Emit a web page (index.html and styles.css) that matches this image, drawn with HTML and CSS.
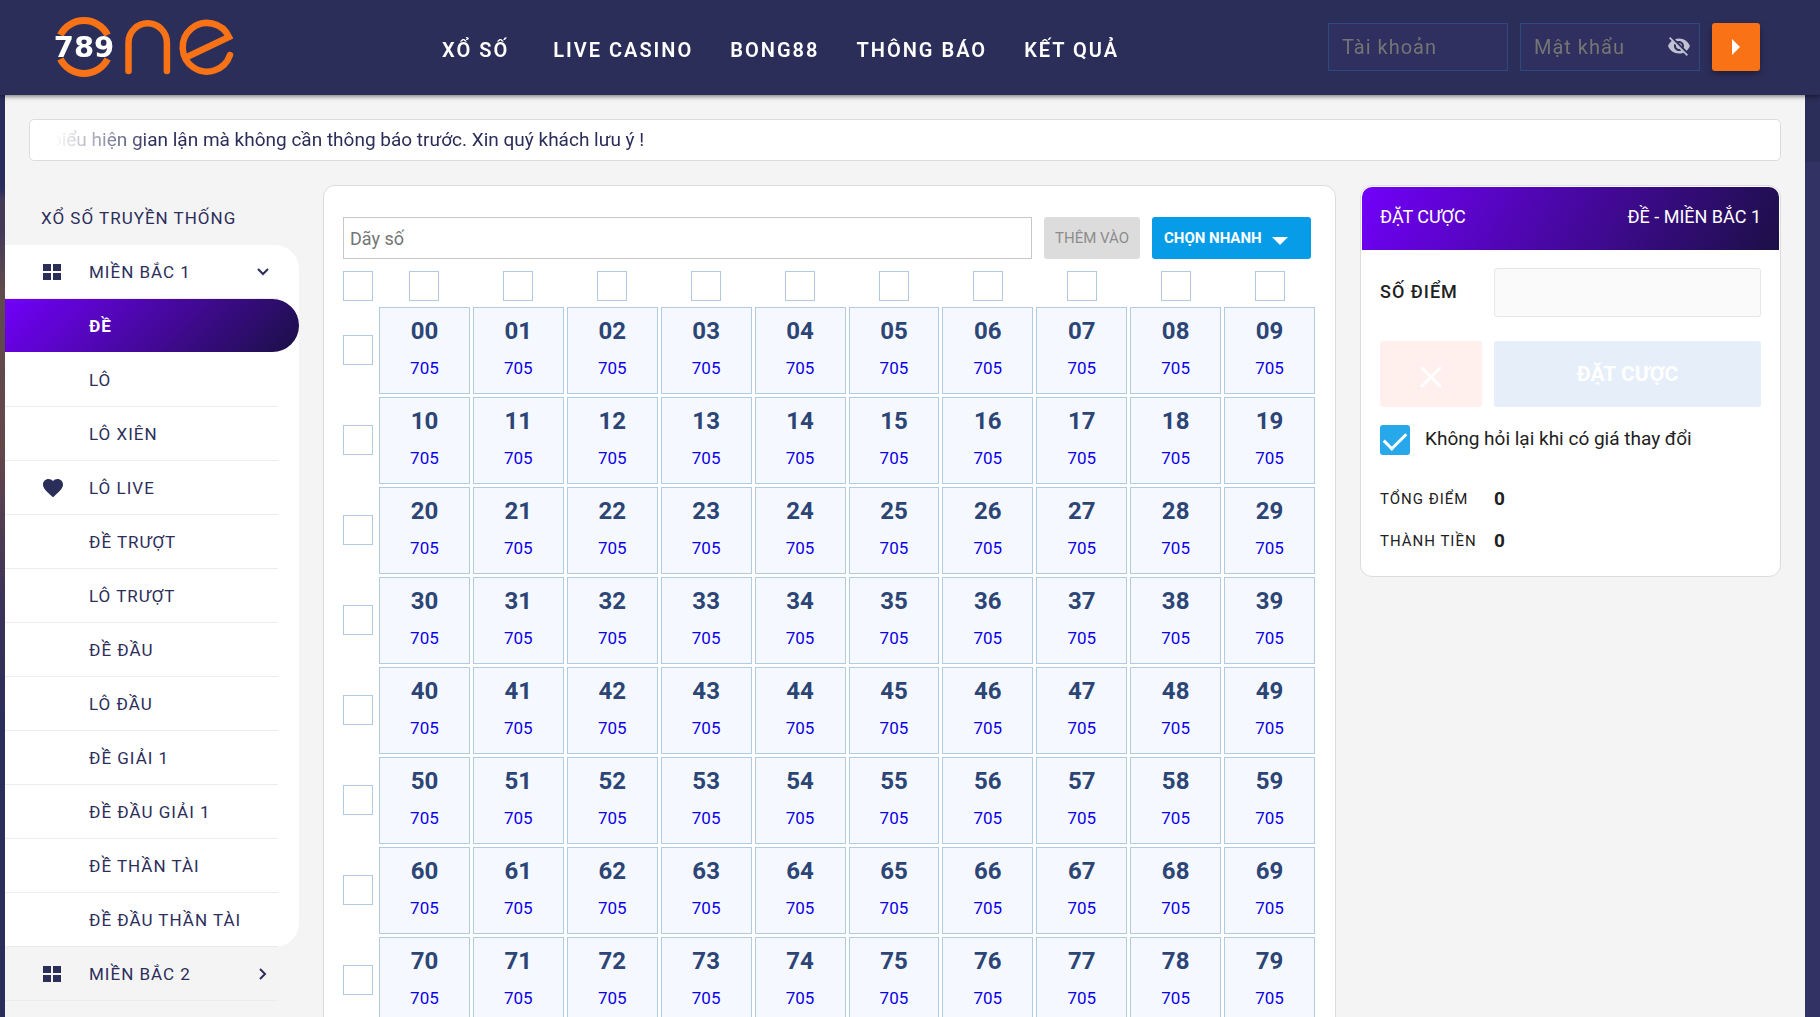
FILE: index.html
```html
<!DOCTYPE html>
<html lang="vi">
<head>
  <meta charset="utf-8">
  <meta name="viewport" content="width=device-width, initial-scale=1">
  <title>789One - Xổ số</title>
  <link rel="stylesheet" href="styles.css">
</head>
<body>
  <svg class="sprite" aria-hidden="true">
    <symbol id="i-grid" viewBox="0 0 18 16"><path d="M0 0h8v7H0zM10 0h8v7h-8zM0 9h8v7H0zM10 9h8v7h-8z"/></symbol>
    <symbol id="i-heart" viewBox="2 3 20 18"><path d="M12 21.35l-1.45-1.32C5.4 15.36 2 12.28 2 8.5 2 5.42 4.42 3 7.5 3c1.74 0 3.41.81 4.5 2.09C13.09 3.81 14.76 3 16.5 3 19.58 3 22 5.42 22 8.5c0 3.78-3.4 6.86-8.55 11.54L12 21.35z"/></symbol>
    <symbol id="i-chevron" viewBox="0 0 12 12"><path d="M3 1l5 5-5 5" fill="none" stroke="currentColor" stroke-width="2"/></symbol>
  </svg>

  <header class="header">
    <a class="logo" href="#" aria-label="789 One">
      <svg width="186" height="64" viewBox="49 15 186 64">
        <g fill="none" stroke="#f97316" stroke-width="7">
          <path d="M60.400 35A26.500 26.500 0 0 1 107.600 35M60.400 59A26.500 26.500 0 0 0 107.600 59"/>
          <path stroke-width="6.500" stroke-linecap="round" d="M128.500 71V42.500a19.200 19.200 0 0 1 38.400 0V71M230 55A24.300 24.300 0 1 1 229 37L189 56"/>
        </g>
        <text class="logo-digits" x="84" y="57" text-anchor="middle">789</text>
      </svg>
    </a>
    <nav class="nav">
      <a class="nav-first" href="#">XỔ SỐ</a>
      <a href="#">LIVE CASINO</a>
      <a href="#">BONG88</a>
      <a href="#">THÔNG BÁO</a>
      <a href="#">KẾT QUẢ</a>
    </nav>
    <form class="login">
      <input class="login-input" type="text" placeholder="Tài khoản" aria-label="Tài khoản">
      <div class="password">
        <input class="login-input" type="password" placeholder="Mật khẩu" aria-label="Mật khẩu">
        <button class="eye" type="button" aria-label="Hiện mật khẩu">
          <svg width="24" height="24" viewBox="0 0 24 24" fill="currentColor"><path d="M12 7c2.760 0 5 2.240 5 5 0 .65-.13 1.260-.36 1.830l2.920 2.920c1.510-1.260 2.700-2.890 3.430-4.750-1.730-4.390-6-7.500-11-7.500-1.400 0-2.740.25-3.980.7l2.160 2.160C10.740 7.130 11.350 7 12 7zM2 4.270l2.280 2.280.46.46C3.080 8.300 1.780 10.020 1 12c1.730 4.390 6 7.500 11 7.500 1.550 0 3.030-.3 4.380-.84l.42.42L19.730 22 21 20.730 3.270 3 2 4.270zM7.530 9.800l1.550 1.550c-.05.21-.08.43-.08.65 0 1.660 1.340 3 3 3 .22 0 .44-.03.65-.08l1.550 1.550c-.67.33-1.410.53-2.200.53-2.760 0-5-2.240-5-5 0-.79.2-1.530.53-2.200zm4.310-.78l3.150 3.150.02-.16c0-1.660-1.340-3-3-3l-.17.01z"/></svg>
        </button>
      </div>
      <button class="go" type="submit" aria-label="Đăng nhập">
        <svg width="8" height="16" viewBox="0 0 8 16"><path d="M0 0l8 8-8 8z" fill="#fff"/></svg>
      </button>
    </form>
  </header>

  <main class="page">
    <div class="notice"><div class="notice-window"><p>biểu hiện gian lận mà không cần thông báo trước. Xin quý khách lưu ý !</p></div></div>

    <div class="columns">
      <aside class="sidebar">
        <h2>XỔ SỐ TRUYỀN THỐNG</h2>
        <ul class="menu menu-open">
          <li><a href="#"><span class="icon"><svg width="18" height="16"><use href="#i-grid"/></svg></span>MIỀN BẮC 1<svg class="chevron chevron-down" width="12" height="12"><use href="#i-chevron"/></svg></a></li>
          <li class="active"><a href="#">ĐỀ</a></li>
          <li><a href="#">LÔ</a></li>
          <li><a href="#">LÔ XIÊN</a></li>
          <li><a href="#"><span class="icon"><svg width="20" height="18"><use href="#i-heart"/></svg></span>LÔ LIVE</a></li>
          <li><a href="#">ĐỀ TRƯỢT</a></li>
          <li><a href="#">LÔ TRƯỢT</a></li>
          <li><a href="#">ĐỀ ĐẦU</a></li>
          <li><a href="#">LÔ ĐẦU</a></li>
          <li><a href="#">ĐỀ GIẢI 1</a></li>
          <li><a href="#">ĐỀ ĐẦU GIẢI 1</a></li>
          <li><a href="#">ĐỀ THẦN TÀI</a></li>
          <li><a href="#">ĐỀ ĐẦU THẦN TÀI</a></li>
        </ul>
        <ul class="menu">
          <li><a href="#"><span class="icon"><svg width="18" height="16"><use href="#i-grid"/></svg></span>MIỀN BẮC 2<svg class="chevron" width="12" height="12"><use href="#i-chevron"/></svg></a></li>
        </ul>
      </aside>

      <section class="board">
        <div class="toolbar">
          <input class="series" type="text" placeholder="Dãy số" aria-label="Dãy số">
          <button class="add" type="button" disabled>THÊM VÀO</button>
          <button class="quick" type="button">CHỌN NHANH<svg width="16" height="8" viewBox="0 0 16 8"><path d="M0 0h16L8 8z" fill="#fff"/></svg></button>
        </div>
        <div class="numbers" id="numbers"></div>
      </section>

      <section class="slip">
        <header class="slip-head"><span>ĐẶT CƯỢC</span><span>ĐỀ - MIỀN BẮC 1</span></header>
        <form class="slip-body">
          <label class="points-label" for="points">SỐ ĐIỂM</label>
          <input class="points" id="points" type="text">
          <button class="clear" type="button" aria-label="Xóa"><svg width="22" height="22" viewBox="0 0 22 22"><path d="M2 2l18 18M20 2L2 20" stroke="#fff" stroke-width="3" stroke-linecap="round"/></svg></button>
          <button class="bet" type="submit">ĐẶT CƯỢC</button>
          <label class="keep"><input type="checkbox" checked><span>Không hỏi lại khi có giá thay đổi</span></label>
          <span class="total-label">TỔNG ĐIỂM</span><output class="total">0</output>
          <span class="total-label">THÀNH TIỀN</span><output class="total">0</output>
        </form>
      </section>
    </div>
  </main>
  <script src="script.js"></script>
</body>
</html>
```
FILE: styles.css
```css
* { box-sizing: border-box; }

body {
  margin: 0;
  height: 100vh;
  display: flex;
  flex-direction: column;
  overflow: hidden;
  font-family: Roboto, "Liberation Sans", sans-serif;
  font-size: 16px;
  color: #2c2e5a;
  background:
    linear-gradient(#2c2e5a 0 162px, #323265 162px) right / 15px 100% no-repeat,
    linear-gradient(#2a2d5c 190px, #443a58 200px 230px, #5f4a4c 290px, #65474a 450px, #543e50 510px, #3c3358 600px, #2c2e5a 720px);
}

a { color: inherit; text-decoration: none; }
button, input { font: inherit; margin: 0; }
button { border: 0; padding: 0; border-radius: 3px; }
.sprite { display: none; }

/* Header */
.header {
  position: relative;
  z-index: 1;
  flex: none;
  height: 95px;
  padding: 0 60px 1px 49px;
  display: flex;
  align-items: center;
  background: #2c2e5a;
  box-shadow: 0 1px 5px rgba(0, 0, 0, .6);
}
.logo svg { display: block; }
.logo-digits { font: bold 29px "DejaVu Sans", sans-serif; fill: #fff; }
.nav {
  display: flex;
  gap: 37px;
  margin-left: 207px;
  padding-top: 5px;
  font-size: 20px;
  font-weight: 600;
  letter-spacing: 2px;
  color: #fff;
  white-space: nowrap;
}
.nav-first { margin-right: 7px; }
.login {
  display: flex;
  gap: 12px;
  margin-left: auto;
}
.login-input {
  width: 180px;
  height: 48px;
  padding: 0 13px;
  font-size: 20px;
  letter-spacing: 1px;
  color: #fff;
  background: #2f2f60;
  border: 1px solid #2d4a80;
}
.login-input::placeholder { color: #757575; }
.password { position: relative; }
.eye {
  position: absolute;
  top: 11px;
  right: 9px;
  height: 24px;
  color: #c1c1d2;
  background: none;
}
.eye svg { display: block; }
.go {
  width: 48px;
  height: 48px;
  display: grid;
  place-items: center;
  background: #f97316;
  box-shadow: 0 3px 6px rgba(0, 0, 0, .35);
}

/* Page */
.page {
  flex: 1;
  min-height: 0;
  margin: 0 15px 0 5px;
  padding-top: 24px;
  overflow-y: auto;
  scrollbar-width: none;
  background: #f4f4f4;
}
.notice {
  margin: 0 24px;
  height: 42px;
  padding: 0 24px;
  background: #fff;
  border: 1px solid #dcdce0;
  border-radius: 5px;
}
.notice-window {
  display: flex;
  overflow: hidden;
  mask-image: linear-gradient(90deg, transparent, #000 100px);
}
.notice p {
  margin: 0 0 0 -3px;
  font-size: 19px;
  line-height: 40px;
  white-space: nowrap;
}
.columns {
  display: grid;
  grid-template-columns: 294px minmax(0, 1fr) 421px;
  column-gap: 24px;
  align-items: start;
  padding: 24px 24px 0 0;
}

/* Sidebar */
.sidebar {
  font-weight: 400;
  letter-spacing: 1px;
}
.sidebar h2 {
  margin: 0;
  padding-left: 36px;
  font-size: 17px;
  font-weight: 400;
  line-height: 66px;
  height: 60px;
}
.menu { margin: 0; padding: 0; list-style: none; font-size: 17px; }
.menu-open { background: #fff; border-radius: 0 24px 24px 0; }
.menu li {
  height: 54px;
  background: linear-gradient(#ececec, #ececec) bottom left / 273px 1px no-repeat;
}
.menu a {
  display: flex;
  align-items: center;
  height: 54px;
  padding: 0 30px 0 84px;
}
.menu .active {
  height: 53px;
  margin-bottom: 1px;
  color: #fff;
  font-weight: 700;
  background: linear-gradient(135deg, #7200fa, #1b1046);
  border-radius: 0 27px 27px 0;
}
.icon {
  width: 46px;
  margin-left: -46px;
  display: flex;
}
.icon svg, .chevron { fill: currentColor; }
.chevron { margin-left: auto; }
.chevron-down { transform: rotate(90deg); }

/* Number board */
.board, .slip {
  background: #fff;
  border: 1px solid #dcdce0;
  border-radius: 12px;
}
.board { padding: 31px 20px 20px 19px; }
.toolbar {
  display: flex;
  gap: 12px;
  padding-right: 4px;
}
.series {
  flex: 1;
  min-width: 0;
  height: 42px;
  padding: 0 6px;
  font-size: 18px;
  border: 1px solid #c8c8c8;
}
.add { width: 96px; font-size: 15px; color: #8c8c8c; background: #dcdcdc; }
.quick {
  width: 159px;
  display: flex;
  align-items: center;
  gap: 10px;
  padding-left: 12px;
  font-size: 15px;
  font-weight: 700;
  color: #fff;
  background: #069ce8;
}
.quick svg { margin-top: 6px; }
.numbers {
  display: grid;
  grid-template-columns: 33px repeat(10, minmax(0, 1fr));
  grid-template-rows: 33px;
  grid-auto-rows: 87px;
  gap: 3px;
  margin-top: 12px;
}
.numbers input {
  appearance: none;
  width: 30px;
  height: 30px;
  background: #fff;
  border: 1px solid #b0cbe2;
}
.numbers .column-pick { justify-self: center; }
.numbers .row-pick { margin-top: 28px; }
.cell {
  display: flex;
  flex-direction: column;
  align-items: center;
  padding-top: 9px;
  background: #f5f8ff;
  border: 1px solid #b0cbe2;
  border-radius: 0;
}
.cell b { font-size: 24px; line-height: 28px; color: #2c4575; }
.cell span { margin-top: 13px; font-size: 17px; line-height: 20px; color: #0c00e8; }

/* Bet slip */
.slip { padding: 1px; }
.slip-head {
  display: flex;
  justify-content: space-between;
  height: 63px;
  line-height: 60px;
  padding: 0 18px;
  font-size: 18px;
  color: #fff;
  background: linear-gradient(120deg, #7200fa, #1b1046);
  border-radius: 10px 10px 0 0;
}
.slip-body {
  display: grid;
  grid-template-columns: 102px minmax(0, 1fr);
  grid-template-rows: 73px 84px 53px 42px 42px;
  column-gap: 12px;
  align-items: start;
  padding: 18px 18px 13px;
  color: #212121;
}
.points-label { font-size: 18px; font-weight: 500; letter-spacing: 1px; line-height: 47px; white-space: nowrap; }
.points { width: 100%; height: 49px; border: 1px solid #e6e6e6; border-radius: 3px; background: #fafafa; }
.clear { height: 66px; display: grid; place-items: center; background: #ffefed; }
.clear svg { margin-top: 6px; }
.bet { height: 66px; font-size: 21px; font-weight: 700; color: #fff; background: #e6eef9; }
.keep {
  grid-column: 1 / -1;
  display: flex;
  gap: 15px;
  font-size: 19px;
  line-height: 28px;
}
.keep input {
  appearance: none;
  width: 30px;
  height: 30px;
  padding-bottom: 4px;
  border-radius: 3px;
  background: #26a8ea;
  display: grid;
  place-items: center;
}
.keep input::before {
  content: "";
  width: 19px;
  height: 10px;
  border-left: 3px solid #fff;
  border-bottom: 3px solid #fff;
  transform: rotate(-45deg);
}
.total-label, .total { line-height: 42px; }
.total-label { font-size: 15px; letter-spacing: 1px; white-space: nowrap; }
.total { font-size: 19px; font-weight: 700; }
```
FILE: script.js
```js
const board = document.getElementById('numbers');
const pick = (cls, label) => `<input type="checkbox" class="${cls}" aria-label="${label}">`;

let html = pick('all-pick', 'Chọn tất cả');
for (let c = 0; c < 10; c++) html += pick('column-pick', `Chọn cột ${c}`);
for (let r = 0; r < 8; r++) {
  html += pick('row-pick', `Chọn hàng ${r}`);
  for (let c = 0; c < 10; c++) {
    html += `<button type="button" class="cell"><b>${r}${c}</b><span>705</span></button>`;
  }
}
board.innerHTML = html;
```
